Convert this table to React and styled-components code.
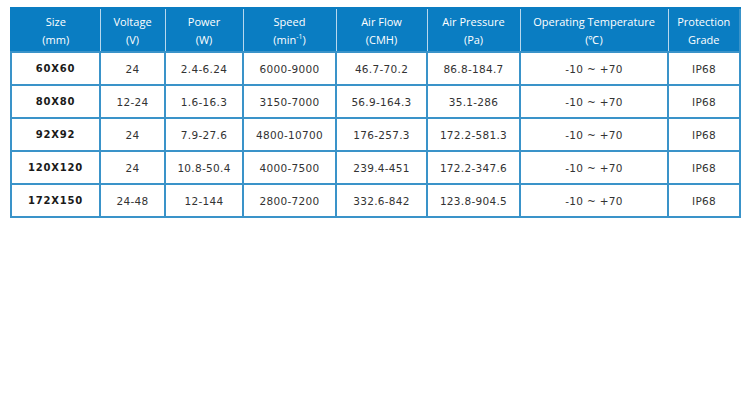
import styled, { createGlobalStyle } from "styled-components";

const GlobalStyle = createGlobalStyle`
  body {
    margin: 0;
    background: #fff;
  }
`;

const Page = styled.div`
  padding: 7px 11px 0 10px;
`;

const Table = styled.table`
  width: 729px;
  border-collapse: collapse;
  table-layout: fixed;
  border: 2px solid #3a93c9;
`;

const HeadCell = styled.th`
  background: #0a7dc2;
  color: #fff;
  font-family: "Open Sans", "Liberation Sans", sans-serif;
  font-weight: 400;
  font-size: 11px;
  line-height: 18px;
  height: 41px;
  padding: 1px 0 0;
  text-align: center;
  vertical-align: middle;
  border-left: 1px solid #b7d8ee;
  border-top: 2px solid #0a7dc2;
  border-bottom: 2px solid #3a93c9;

  &:first-child {
    border-left: 2px solid #0a7dc2;
  }

  & sup {
    font-size: 7px;
    line-height: 0;
  }
`;

const Cell = styled.td`
  height: 31px;
  padding: 0;
  text-align: center;
  vertical-align: middle;
  border: 2px solid #3a93c9;
  font-family: "DejaVu Sans", Verdana, sans-serif;
  font-size: ${(p) => (p.$bold ? "10px" : "10.5px")};
  font-weight: ${(p) => (p.$bold ? 700 : 400)};
  letter-spacing: ${(p) => (p.$bold ? "0.8px" : "0.3px")};
  color: ${(p) => (p.$bold ? "#1a1a1a" : "#333")};
`;

const widths = [89, 65, 78, 93, 91, 93, 148, 72];

const headers = [
  ["Size", "(mm)"],
  ["Voltage", "(V)"],
  ["Power", "(W)"],
  ["Speed", <>(min<sup>-1</sup>)</>],
  ["Air Flow", "(CMH)"],
  ["Air Pressure", "(Pa)"],
  ["Operating Temperature", "(℃)"],
  ["Protection", "Grade"],
];

const rows = [
  ["60X60", "24", "2.4-6.24", "6000-9000", "46.7-70.2", "86.8-184.7", "-10 ~ +70", "IP68"],
  ["80X80", "12-24", "1.6-16.3", "3150-7000", "56.9-164.3", "35.1-286", "-10 ~ +70", "IP68"],
  ["92X92", "24", "7.9-27.6", "4800-10700", "176-257.3", "172.2-581.3", "-10 ~ +70", "IP68"],
  ["120X120", "24", "10.8-50.4", "4000-7500", "239.4-451", "172.2-347.6", "-10 ~ +70", "IP68"],
  ["172X150", "24-48", "12-144", "2800-7200", "332.6-842", "123.8-904.5", "-10 ~ +70", "IP68"],
];

export default function App() {
  return (
    <>
      <GlobalStyle />
      <Page>
        <Table>
          <colgroup>
            {widths.map((w, i) => (
              <col key={i} style={{ width: w }} />
            ))}
          </colgroup>
          <thead>
            <tr>
              {headers.map(([a, b], i) => (
                <HeadCell key={i}>
                  {a}
                  <br />
                  {b}
                </HeadCell>
              ))}
            </tr>
          </thead>
          <tbody>
            {rows.map((row) => (
              <tr key={row[0]}>
                {row.map((v, i) => (
                  <Cell key={i} $bold={i === 0}>
                    {v}
                  </Cell>
                ))}
              </tr>
            ))}
          </tbody>
        </Table>
      </Page>
    </>
  );
}
